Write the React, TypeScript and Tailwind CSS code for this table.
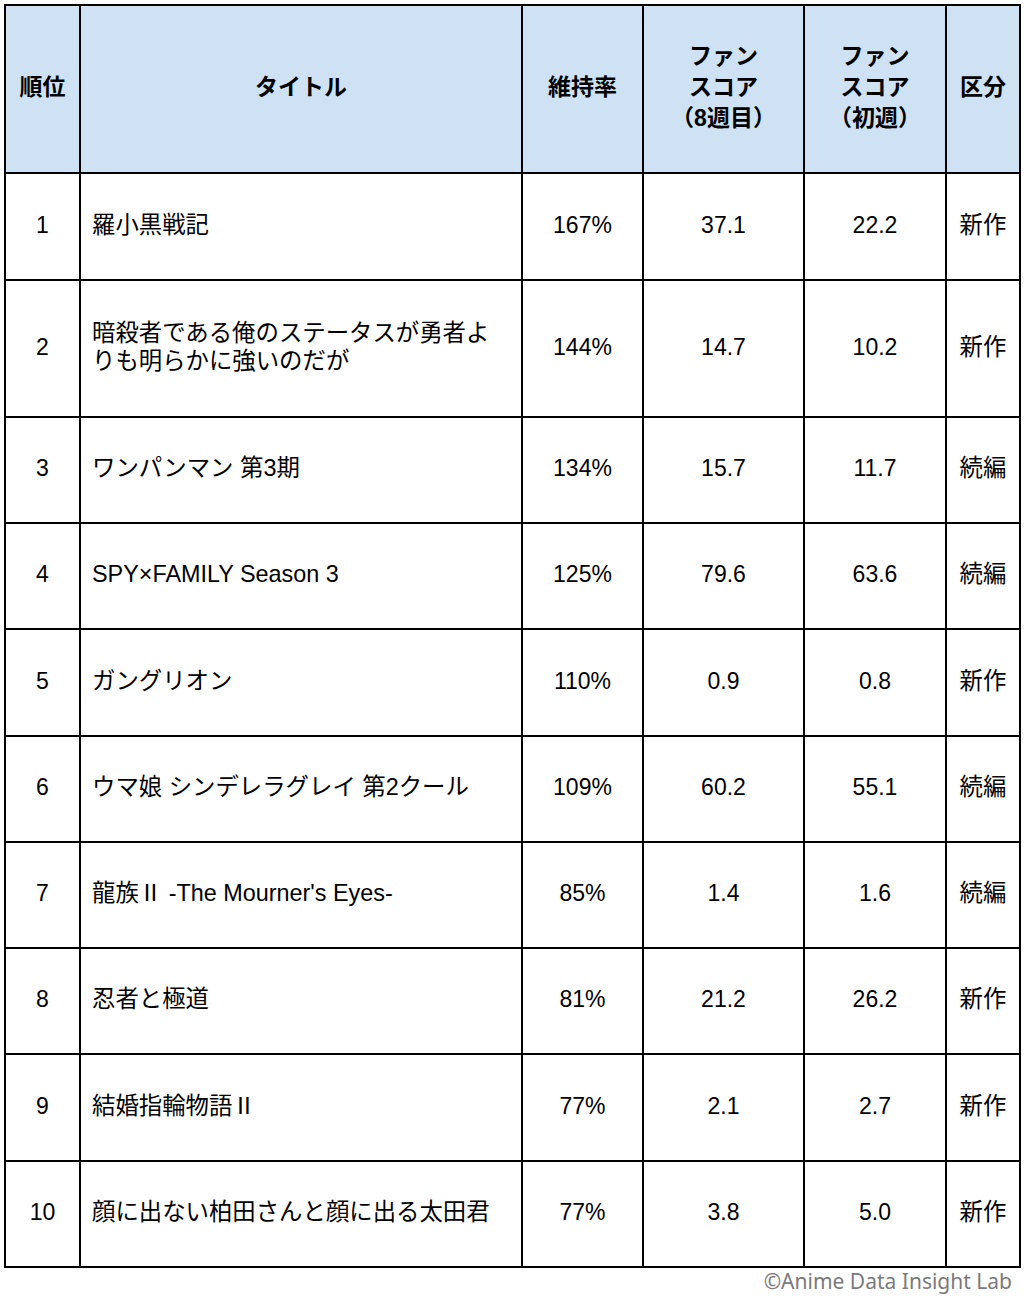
import React from 'react';

type Row = {
    rank: string;
    title: React.ReactNode;
    rate: string;
    week8: string;
    week1: string;
    kind: string;
    h: string;
};

const rows: Row[] = [
    { rank: '1', title: '羅小黒戦記', rate: '167%', week8: '37.1', week1: '22.2', kind: '新作', h: 'h-[107px]' },
    {
        rank: '2',
        title: (
            <>
                暗殺者である俺のステータスが勇者よ
                <br />
                りも明らかに強いのだが
            </>
        ),
        rate: '144%',
        week8: '14.7',
        week1: '10.2',
        kind: '新作',
        h: 'h-[137px]',
    },
    { rank: '3', title: 'ワンパンマン 第3期', rate: '134%', week8: '15.7', week1: '11.7', kind: '続編', h: 'h-[106px]' },
    { rank: '4', title: 'SPY×FAMILY Season 3', rate: '125%', week8: '79.6', week1: '63.6', kind: '続編', h: 'h-[106px]' },
    { rank: '5', title: 'ガングリオン', rate: '110%', week8: '0.9', week1: '0.8', kind: '新作', h: 'h-[107px]' },
    { rank: '6', title: 'ウマ娘 シンデレラグレイ 第2クール', rate: '109%', week8: '60.2', week1: '55.1', kind: '続編', h: 'h-[106px]' },
    { rank: '7', title: '龍族Ⅱ -The Mourner\'s Eyes-', rate: '85%', week8: '1.4', week1: '1.6', kind: '続編', h: 'h-[106px]' },
    { rank: '8', title: '忍者と極道', rate: '81%', week8: '21.2', week1: '26.2', kind: '新作', h: 'h-[106px]' },
    { rank: '9', title: '結婚指輪物語Ⅱ', rate: '77%', week8: '2.1', week1: '2.7', kind: '新作', h: 'h-[107px]' },
    { rank: '10', title: '顔に出ない柏田さんと顔に出る太田君', rate: '77%', week8: '3.8', week1: '5.0', kind: '新作', h: 'h-[106px]' },
];

const cell = 'border-r-2 border-b-2 border-black flex items-center pb-[4px]';

const App: React.FC = () => {
    return (
        <div
            className="w-[1028px] h-[1296px] bg-white overflow-hidden text-black"
            style={{ fontFamily: '"Liberation Sans", "Noto Sans CJK JP", sans-serif' }}
        >
            <div className="pt-[4px] pl-[4px]">
                <div className="grid grid-cols-[75px_442px_121px_161px_142px_74px] w-[1017px] border-l-2 border-t-2 border-black text-[23px] leading-[28px]">
                    {/* header */}
                    <div className={`${cell} h-[168px] justify-center bg-[#cfe2f3] font-bold`}>順位</div>
                    <div className={`${cell} h-[168px] justify-center bg-[#cfe2f3] font-bold`}>タイトル</div>
                    <div className={`${cell} h-[168px] justify-center bg-[#cfe2f3] font-bold`}>維持率</div>
                    <div className={`${cell} h-[168px] justify-center bg-[#cfe2f3] font-bold text-center leading-[31px]`}>
                        <div>
                            ファン
                            <br />
                            スコア
                            <br />
                            （8週目）
                        </div>
                    </div>
                    <div className={`${cell} h-[168px] justify-center bg-[#cfe2f3] font-bold text-center leading-[31px]`}>
                        <div>
                            ファン
                            <br />
                            スコア
                            <br />
                            （初週）
                        </div>
                    </div>
                    <div className={`${cell} h-[168px] justify-center bg-[#cfe2f3] font-bold`}>区分</div>

                    {rows.map((r) => (
                        <React.Fragment key={r.rank}>
                            <div className={`${cell} ${r.h} justify-center`}>{r.rank}</div>
                            <div className={`${cell} ${r.h} pl-[11px] pr-[8px] text-[23.4px]`}>
                                <div>{r.title}</div>
                            </div>
                            <div className={`${cell} ${r.h} justify-center`}>{r.rate}</div>
                            <div className={`${cell} ${r.h} justify-center`}>{r.week8}</div>
                            <div className={`${cell} ${r.h} justify-center`}>{r.week1}</div>
                            <div className={`${cell} ${r.h} justify-center text-[23.4px]`}>{r.kind}</div>
                        </React.Fragment>
                    ))}
                </div>
            </div>
            <div
                className="w-[1012px] text-right text-[21px] leading-[24px] mt-[1px] text-[#7a7a7a]"
                style={{ fontFamily: '"Noto Sans", "Open Sans", sans-serif' }}
            >
                ©Anime Data Insight Lab
            </div>
        </div>
    );
};

export default App;
